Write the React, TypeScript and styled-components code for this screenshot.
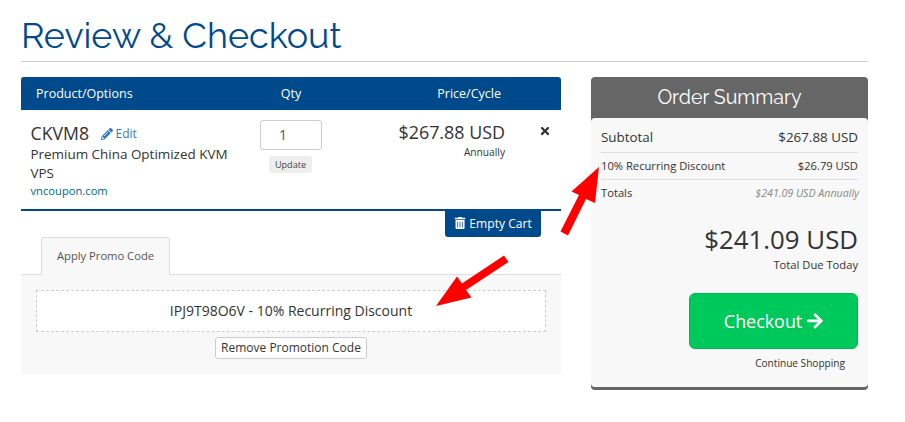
import React from "react";
import styled, { createGlobalStyle } from "styled-components";
import { FaArrowRight, FaPencilAlt, FaTimes, FaTrashAlt } from "react-icons/fa";

const navy = "#004a8b";
const ink = "#333";

const GlobalStyle = createGlobalStyle`
  *, *::before, *::after { box-sizing: border-box; }
  body {
    margin: 0;
    background: #fff;
    color: ${ink};
    font-family: "Open Sans", "Noto Sans", sans-serif;
    font-size: 14px;
    line-height: 20px;
    overflow: hidden;
  }
  button, input { font: inherit; }
`;

const Page = styled.main`
  position: relative;
  height: 422px;
  padding: 0 37px 0 21px;
`;

const Title = styled.h1`
  margin: 0 0 15px;
  height: 62px;
  padding-top: 15px;
  border-bottom: 1px solid #ccc;
  color: ${navy};
  font: 400 35.9px/41px Raleway, Lato, sans-serif;
  white-space: nowrap;
`;

const Columns = styled.div`
  display: grid;
  grid-template-columns: 540px 277px;
  column-gap: 30px;
  align-items: start;
`;

const CartHeader = styled.div`
  display: grid;
  grid-template-columns: 210px 90px 165px;
  height: 33px;
  padding-left: 15px;
  border-radius: 3px 3px 0 0;
  background: ${navy};
  color: #fff;
  font-size: 12.5px;
  line-height: 33px;
`;

const HeaderCell = styled.span<{ $align?: "center" | "right" }>`
  text-align: ${(p) => p.$align ?? "left"};
`;

const CartItem = styled.div`
  display: grid;
  grid-template-columns: 220px 80px 175px 55px;
  height: 101px;
  padding: 10px 0 0 9px;
  border-bottom: 2px solid ${navy};
`;

const ItemText = styled.div`
  padding-left: 0.5px;
`;

const ItemName = styled.div`
  display: flex;
  align-items: center;
  height: 25px;
  font-size: 17.7px;
`;

const EditLink = styled.a`
  display: flex;
  align-items: center;
  gap: 3px;
  margin: 2px 0 0 11.5px;
  color: #337ab7;
  font-size: 12px;
`;

const ItemGroup = styled.div`
  width: 205px;
  font-size: 13.45px;
  line-height: 19px;
`;

const ItemDomain = styled.div`
  color: #006687;
  font-size: 11.2px;
  line-height: 15px;
`;

const Quantity = styled.div`
  display: flex;
  flex-direction: column;
  align-items: center;
  width: 62px;
  margin-left: 10px;
`;

const QtyInput = styled.input`
  width: 62px;
  height: 30px;
  padding: 0 16px 1px 0;
  border: 1px solid #ccc;
  border-radius: 3px;
  background: #fff;
  color: #555;
  text-align: center;
  outline: none;
`;

const UpdateButton = styled.button`
  width: 43px;
  height: 17px;
  margin: 6px 1px 0 0;
  padding: 0;
  border: 0;
  border-radius: 3px;
  background: #eee;
  color: #444;
  font-size: 9.1px;
  line-height: 17px;
`;

const Price = styled.div`
  text-align: right;
  font-size: 17.9px;
  line-height: 25px;
`;

const Cycle = styled.div`
  font-size: 10.2px;
  line-height: 15px;
`;

const Remove = styled.div`
  display: flex;
  justify-content: center;
  padding: 5px 0 0 25px;
  font-size: 12px;
`;

const EmptyCart = styled.button`
  display: flex;
  align-items: center;
  justify-content: center;
  gap: 3px;
  width: 96px;
  height: 26px;
  margin: 0 20px 0 auto;
  padding: 0 0 1px;
  border: 0;
  border-radius: 0 0 3px 3px;
  background: ${navy};
  color: #fff;
  font-size: 12.1px;
  white-space: nowrap;
`;

const Tabs = styled.div`
  display: flex;
  height: 38px;
  padding-left: 20px;
  border-bottom: 1px solid #ddd;
`;

const Tab = styled.div`
  width: 129px;
  height: 38px;
  border: 1px solid #ddd;
  border-bottom-color: #f8f8f8;
  border-radius: 4px 4px 0 0;
  background: #f8f8f8;
  color: #555;
  font-size: 11.2px;
  line-height: 36px;
  text-align: center;
`;

const PromoPanel = styled.div`
  display: flex;
  flex-direction: column;
  align-items: center;
  height: 99px;
  padding: 15px 15px 0;
  background: #f8f8f8;
`;

const PromoCode = styled.div`
  width: 100%;
  height: 42px;
  border: 1px dashed #ccc;
  background: #fff;
  line-height: 40px;
  text-align: center;
`;

const RemovePromo = styled.button`
  width: 152px;
  height: 22px;
  margin-top: 5px;
  padding: 0 0 1px;
  border: 1px solid #ccc;
  border-radius: 3px;
  background: #fff;
  color: ${ink};
  font-size: 12px;
  line-height: 18px;
  white-space: nowrap;
`;

const Summary = styled.aside`
  height: 313px;
  border-bottom: 3px solid #666;
  border-radius: 4px;
  background: #666;
`;

const SummaryTitle = styled.h2`
  height: 41px;
  margin: 0;
  color: #fff;
  font: 400 19.6px/41px Raleway, Lato, sans-serif;
  text-align: center;
`;

const SummaryBody = styled.div`
  display: flex;
  flex-direction: column;
  height: 269px;
  padding: 4px 10px 0;
  border-radius: 4px;
  background: #f8f8f8;
`;

const SummaryRow = styled.div<{ $size: number; $height: number; $divided?: boolean }>`
  display: flex;
  justify-content: space-between;
  align-items: center;
  height: ${(p) => p.$height}px;
  border-bottom: ${(p) => (p.$divided ? "1px solid #ddd" : "0")};
  font-size: ${(p) => p.$size}px;
  white-space: nowrap;
`;

const Recurring = styled.em`
  margin: -1px -1px 0 0;
  color: #888;
  font-size: 10.65px;
`;

const Total = styled.div`
  margin-top: 17px;
  font-size: 25.8px;
  line-height: 33px;
  text-align: right;
`;

const TotalCaption = styled.div`
  font-size: 11.2px;
  line-height: 17px;
  text-align: right;
`;

const CheckoutButton = styled.button`
  display: flex;
  align-items: center;
  justify-content: center;
  gap: 4px;
  align-self: flex-end;
  width: 169px;
  height: 56px;
  margin-top: 20px;
  padding: 0 0 0 1px;
  border: 1px solid #00b954;
  border-radius: 6px;
  background: #00c95b;
  color: #fff;
  font-size: 17.9px;
`;

const ContinueLink = styled.a`
  margin: 6px 13px 0 0;
  font-size: 10.1px;
  line-height: 16px;
  text-align: right;
`;

const Annotations = styled.svg`
  position: absolute;
  inset: 0;
  pointer-events: none;
`;

export default function App() {
  return (
    <Page>
      <GlobalStyle />
      <Title>Review &amp; Checkout</Title>
      <Columns>
        <section>
          <CartHeader>
            <HeaderCell>Product/Options</HeaderCell>
            <HeaderCell $align="center">Qty</HeaderCell>
            <HeaderCell $align="right">Price/Cycle</HeaderCell>
          </CartHeader>
          <CartItem>
            <ItemText>
              <ItemName>
                CKVM8
                <EditLink><FaPencilAlt />Edit</EditLink>
              </ItemName>
              <ItemGroup>Premium China Optimized KVM VPS</ItemGroup>
              <ItemDomain>vncoupon.com</ItemDomain>
            </ItemText>
            <Quantity>
              <QtyInput defaultValue="1" />
              <UpdateButton>Update</UpdateButton>
            </Quantity>
            <Price>
              $267.88 USD
              <Cycle>Annually</Cycle>
            </Price>
            <Remove><FaTimes /></Remove>
          </CartItem>
          <EmptyCart><FaTrashAlt />Empty Cart</EmptyCart>
          <Tabs><Tab>Apply Promo Code</Tab></Tabs>
          <PromoPanel>
            <PromoCode>IPJ9T98O6V - 10% Recurring Discount</PromoCode>
            <RemovePromo>Remove Promotion Code</RemovePromo>
          </PromoPanel>
        </section>
        <Summary>
          <SummaryTitle>Order Summary</SummaryTitle>
          <SummaryBody>
            <SummaryRow $size={13.4} $height={31} $divided>
              <span>Subtotal</span><span>$267.88 USD</span>
            </SummaryRow>
            <SummaryRow $size={11.2} $height={27} $divided>
              <span>10% Recurring Discount</span><span>$26.79 USD</span>
            </SummaryRow>
            <SummaryRow $size={11.2} $height={26}>
              <span>Totals</span><Recurring>$241.09 USD Annually</Recurring>
            </SummaryRow>
            <Total>$241.09 USD</Total>
            <TotalCaption>Total Due Today</TotalCaption>
            <CheckoutButton>Checkout<FaArrowRight /></CheckoutButton>
            <ContinueLink>Continue Shopping</ContinueLink>
          </SummaryBody>
        </Summary>
      </Columns>
      <Annotations width="905" height="422" fill="#f00" aria-hidden="true">
        <path d="M436 306L457 276.5L462 283.5L504 255.500L508.500 262L466 290L471.500 297.500Z" />
        <path d="M599 167L595 203L586 199L568 235.500L560.500 231.500L579 195L571.500 191.500Z" />
      </Annotations>
    </Page>
  );
}
